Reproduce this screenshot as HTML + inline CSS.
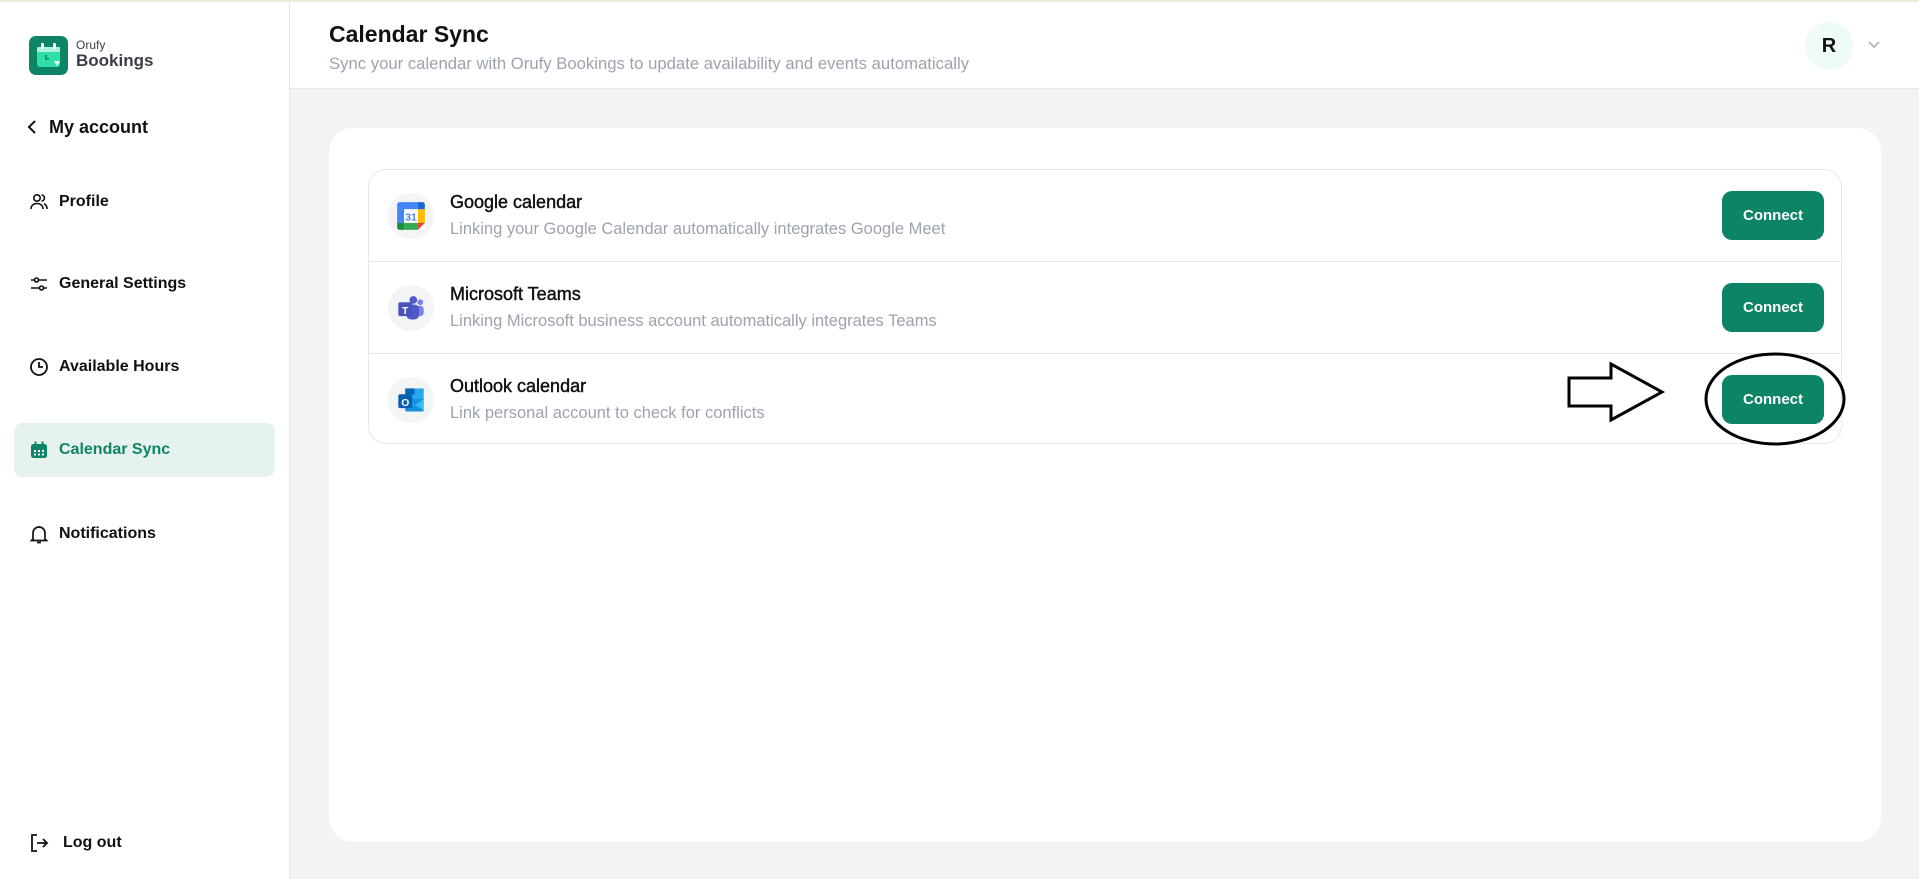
<!DOCTYPE html>
<html><head><meta charset="utf-8"><style>
*{box-sizing:border-box;margin:0;padding:0}
body{width:1919px;height:879px;overflow:hidden;font-family:"Liberation Sans",sans-serif;background:#f2f3f5;position:relative;color:#111}
.top{position:absolute;left:0;top:0;width:1919px;height:2px;background:#efe9d6}
.side{position:absolute;left:0;top:2px;width:290px;height:877px;background:#fff;border-right:1px solid #e5e7eb}
.logo{position:absolute;left:29px;top:34px;width:39px;height:39px;border-radius:7px;background:#0e8466}
.lt1{position:absolute;left:76px;font-size:12px;color:#3a3f47}
.lt2{position:absolute;left:76px;font-size:17px;color:#3a3f47;font-weight:bold}
.it{position:absolute;left:29px;font-size:16px;font-weight:bold;display:flex;align-items:center;gap:10px;height:24px}
.it svg{width:20px;height:20px}
.act{position:absolute;left:14px;top:423px;width:261px;height:54px;border-radius:9px;background:#e6f2ee}
.hdr{position:absolute;left:290px;top:2px;right:0;height:87px;background:#fff;border-bottom:1px solid #e5e7eb}
.h1{position:absolute;left:329px;top:21px;font-size:23px;font-weight:bold}
.h2{position:absolute;left:329px;top:54px;font-size:16.7px;color:#9ca3af}
.av{position:absolute;left:1805px;top:22px;width:48px;height:48px;border-radius:50%;background:#effbf5;font-size:20px;font-weight:600;display:flex;align-items:center;justify-content:center}
.card{position:absolute;left:329px;top:128px;width:1552px;height:714px;background:#fff;border-radius:24px}
.list{position:absolute;left:368px;top:169px;width:1474px;height:275px;border:1px solid #e5e7eb;border-radius:18px}
.row{position:absolute;left:0;width:100%;height:92px}
.ic{position:absolute;left:19px;top:23px;width:46px;height:46px;border-radius:50%;background:#f3f4f6;display:flex;align-items:center;justify-content:center}
.t{position:absolute;left:81px;top:22px;font-size:18px;-webkit-text-stroke:0.45px #111}
.d{position:absolute;left:81px;top:50px;font-size:16.5px;color:#9ca3af}
.btn{position:absolute;left:1353px;top:21px;width:102px;height:49px;border-radius:10px;background:#0e8466;color:#fff;font-weight:bold;font-size:15px;display:flex;align-items:center;justify-content:center}
.sep{position:absolute;left:0;width:100%;height:1px;background:#e5e7eb}
</style></head><body>
<div class="top"></div>
<div class="side">
<div class="logo"><svg width="39" height="39" viewBox="0 0 39 39"><rect x="8" y="11" width="23" height="20" rx="3" fill="#2ee0a8"/><rect x="8" y="11" width="23" height="5" fill="#fff" opacity=".6"/><rect x="12" y="7" width="3" height="6" rx="1" fill="#fff"/><rect x="24" y="7" width="3" height="6" rx="1" fill="#fff"/><path d="M17 19v4h3" stroke="#0e8466" stroke-width="1.6" fill="none"/><path d="M25 25l6 0-3 5z" fill="#fff"/></svg></div>
</div>
<div class="lt1" style="top:38px">Orufy</div>
<div class="lt2" style="top:51px">Bookings</div>
<div class="it" style="top:115px;left:22px;gap:7px"><svg viewBox="0 0 20 20"><path d="M13 4l-6 6 6 6" stroke="#111" stroke-width="2" fill="none"/></svg><span style="font-size:18px;font-weight:bold">My account</span></div>
<div class="act"></div>
<div class="it" style="top:190px"><svg viewBox="0 0 20 20" fill="none" stroke="#111" stroke-width="1.6"><circle cx="8" cy="6" r="3.2"/><path d="M2 17c0-3.5 2.6-5.5 6-5.5s6 2 6 5.5"/><path d="M12.5 3a3 3 0 010 6M15 11.8c2 .8 3 2.6 3 5.2"/></svg>Profile</div>
<div class="it" style="top:272px"><svg viewBox="0 0 20 20" fill="none" stroke="#111" stroke-width="1.6"><path d="M2 6h3M10 6h8M2 14h8M15 14h3"/><circle cx="7.5" cy="6" r="2"/><circle cx="12.5" cy="14" r="2"/></svg>General Settings</div>
<div class="it" style="top:355px"><svg viewBox="0 0 20 20" fill="none" stroke="#111" stroke-width="1.8"><circle cx="10" cy="10" r="8"/><path d="M10 5v5h4"/></svg>Available Hours</div>
<div class="it" style="top:438px;color:#0e8466"><svg viewBox="0 0 20 20"><rect x="2" y="4" width="16" height="14" rx="2.5" fill="#0e8466"/><rect x="5.5" y="1.5" width="2" height="4" fill="#0e8466"/><rect x="12.5" y="1.5" width="2" height="4" fill="#0e8466"/><g fill="#fff"><rect x="5" y="10" width="2" height="2"/><rect x="9" y="10" width="2" height="2"/><rect x="13" y="10" width="2" height="2"/><rect x="5" y="13.5" width="2" height="2"/><rect x="9" y="13.5" width="2" height="2"/><rect x="13" y="13.5" width="2" height="2"/></g></svg>Calendar Sync</div>
<div class="it" style="top:522px"><svg viewBox="0 0 20 20" fill="none" stroke="#111" stroke-width="1.7"><path d="M4 15V9a6 6 0 0112 0v6l1.5 1.5h-15z"/><path d="M8 18.5h4"/></svg>Notifications</div>
<div class="it" style="top:831px;gap:14px"><svg viewBox="0 0 20 20" fill="none" stroke="#111" stroke-width="1.8"><path d="M8 2H3v16h5"/><path d="M8 10h10M14 6l4 4-4 4"/></svg>Log out</div>
<div class="hdr"></div>
<div class="h1">Calendar Sync</div>
<div class="h2">Sync your calendar with Orufy Bookings to update availability and events automatically</div>
<div class="av">R</div>
<svg style="position:absolute;left:1868px;top:41px" width="12" height="8" viewBox="0 0 12 8"><path d="M1 1l5 5 5-5" stroke="#aaa" stroke-width="1.5" fill="none"/></svg>
<div class="card"></div>
<div class="list">
<div class="row" style="top:0">
<div class="ic"><svg width="30" height="30" viewBox="0 0 26 26"><rect x="1" y="1" width="24" height="24" rx="2" fill="#fff"/><path d="M1 19h6v6H3a2 2 0 01-2-2z" fill="#1e8e3e"/><path d="M7 19h12v6H7z" fill="#34a853"/><path d="M19 7h6v12h-6z" fill="#fbbc04"/><path d="M19 19h6l-6 6z" fill="#ea4335"/><path d="M1 3a2 2 0 012-2h16v6H1z" fill="#4285f4"/><path d="M19 1h4a2 2 0 012 2v4h-6z" fill="#1967d2"/><path d="M1 7h6v12H1z" fill="#4285f4"/><text x="13" y="17" font-size="9" font-weight="bold" fill="#4285f4" text-anchor="middle" font-family="Liberation Sans">31</text></svg></div>
<div class="t">Google calendar</div><div class="d">Linking your Google Calendar automatically integrates Google Meet</div><div class="btn">Connect</div></div>
<div class="sep" style="top:91px"></div>
<div class="row" style="top:92px">
<div class="ic"><svg width="30" height="30" viewBox="0 0 26 26"><circle cx="21" cy="8" r="2.5" fill="#7b83eb"/><circle cx="15" cy="6" r="3.3" fill="#5059c9"/><rect x="17" y="11" width="7" height="9" rx="3" fill="#7b83eb"/><rect x="9" y="10" width="11" height="13" rx="4" fill="#5059c9"/><rect x="2" y="8" width="12" height="12" rx="1.5" fill="#4b53bc"/><text x="8" y="18" font-size="9" font-weight="bold" fill="#fff" text-anchor="middle" font-family="Liberation Sans">T</text></svg></div>
<div class="t">Microsoft Teams</div><div class="d">Linking Microsoft business account automatically integrates Teams</div><div class="btn">Connect</div></div>
<div class="sep" style="top:183px"></div>
<div class="row" style="top:184px">
<div class="ic"><svg width="30" height="30" viewBox="0 0 26 26"><rect x="8" y="3" width="16" height="10" fill="#28a8ea"/><rect x="8" y="3" width="8" height="5" fill="#0364b8"/><path d="M8 12h16v10a1 1 0 01-1 1H9a1 1 0 01-1-1z" fill="#1490df"/><path d="M8 12l8 6 8-6v10z" fill="#50d9ff" opacity=".6"/><rect x="2" y="8" width="12" height="12" rx="1.5" fill="#0a5fb0"/><text x="8" y="18" font-size="9" font-weight="bold" fill="#fff" text-anchor="middle" font-family="Liberation Sans">O</text></svg></div>
<div class="t">Outlook calendar</div><div class="d">Link personal account to check for conflicts</div><div class="btn">Connect</div></div>
</div>
<svg style="position:absolute;left:0;top:0" width="1919" height="879"><path d="M1569 378h42v-14l51 28-51 28v-14h-42z" fill="none" stroke="#000" stroke-width="3"/><ellipse cx="1775" cy="399" rx="69" ry="45" fill="none" stroke="#000" stroke-width="3"/></svg>
</body></html>
